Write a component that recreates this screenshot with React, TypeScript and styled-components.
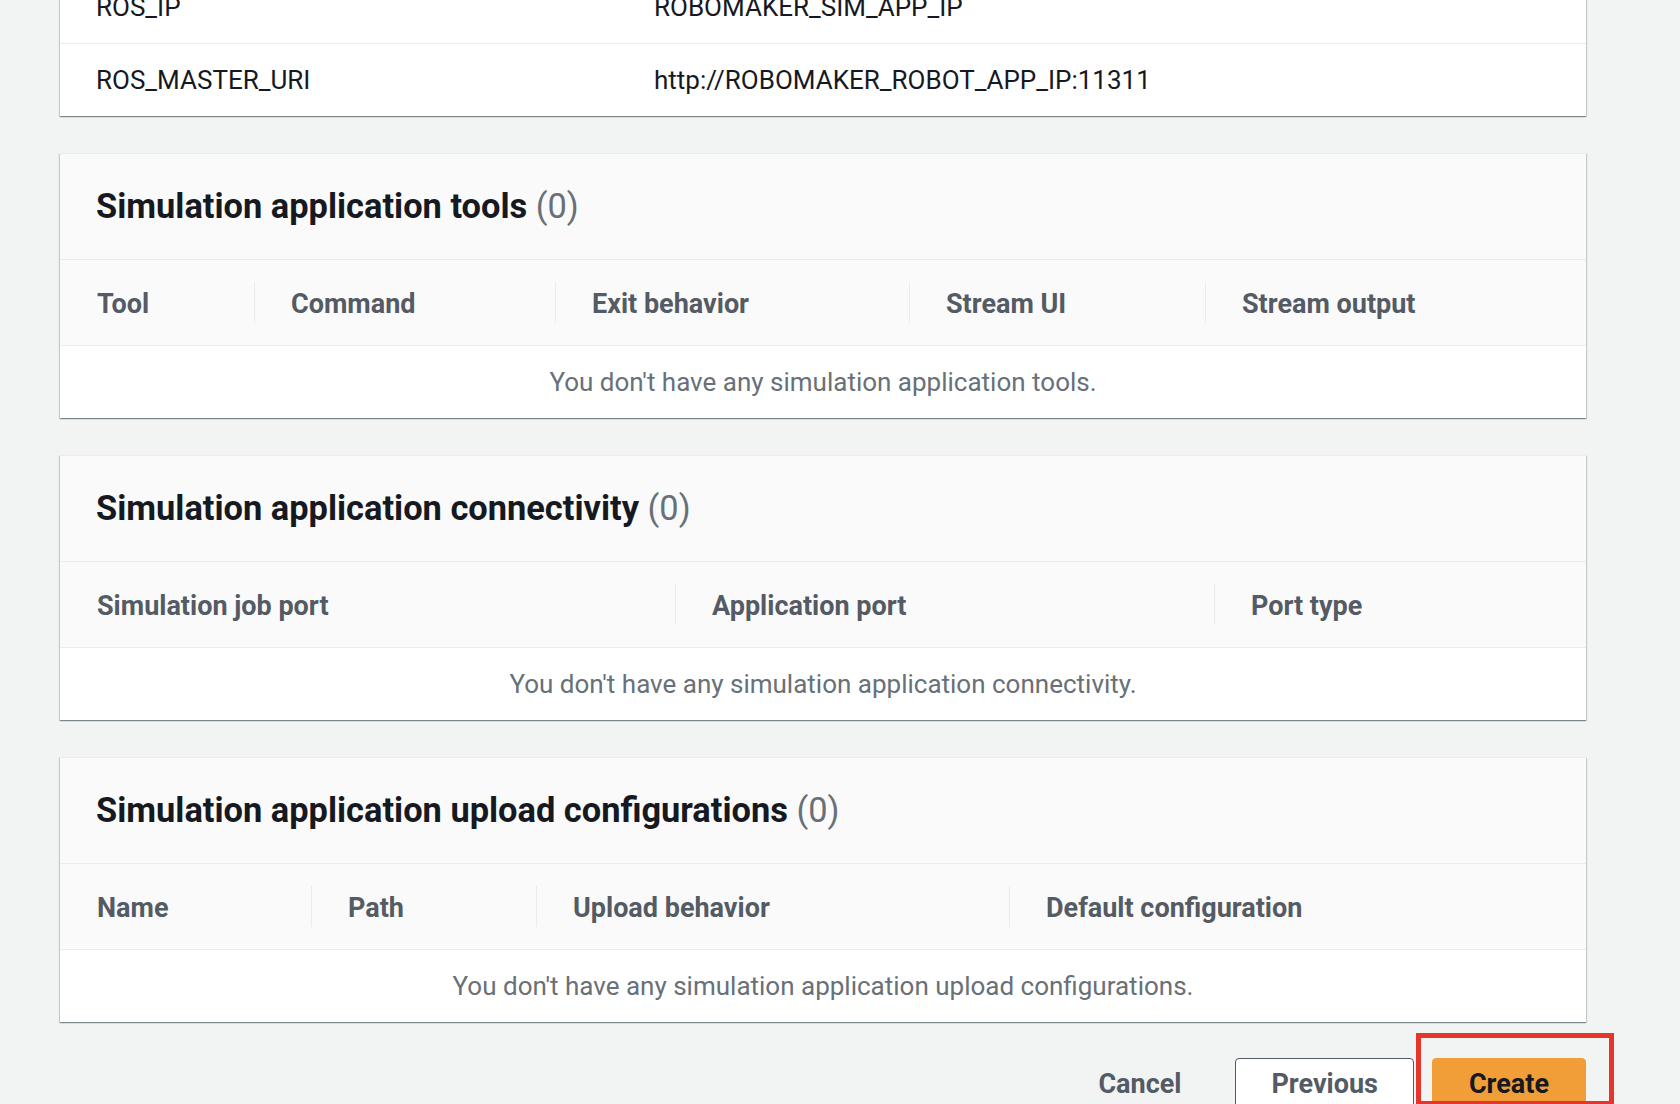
import React from "react";
import styled, { createGlobalStyle } from "styled-components";

const GlobalStyle = createGlobalStyle`
  html, body {
    margin: 0;
    padding: 0;
    background: #f2f3f3;
  }
  body {
    font-family: Roboto, "Liberation Sans", Arial, sans-serif;
    -webkit-font-smoothing: antialiased;
  }
  * { box-sizing: border-box; }
`;

const Page = styled.div`
  height: 1104px;
  overflow: hidden;
  background: #f2f3f3;
`;

const Content = styled.main`
  margin-top: -30px;
  padding: 0 94px 0 60px;
  display: flex;
  flex-direction: column;
  gap: 37px;
`;

const Card = styled.section`
  background: #ffffff;
  border-top: 1px solid #eaeded;
  box-shadow: 0 1px 1px 0 rgba(0, 28, 36, 0.3),
    1px 1px 1px 0 rgba(0, 28, 36, 0.15),
    -1px 1px 1px 0 rgba(0, 28, 36, 0.15);
`;

const CardHeader = styled.header`
  height: 106px;
  display: flex;
  align-items: center;
  padding: 0 36px 2px;
  background: #fafafa;
  border-bottom: 1px solid #eaeded;
`;

const Title = styled.h2`
  margin: 0;
  font-size: 34.4px;
  line-height: 46px;
  font-weight: 700;
  color: #16191f;
`;

const Count = styled.span`
  font-weight: 400;
  color: #687078;
`;

const KVRow = styled.div`
  display: grid;
  grid-template-columns: 558px 1fr;
  height: 73px;
  align-items: center;
  border-bottom: 1px solid #eaeded;
  &:last-child {
    height: 72px;
    border-bottom: none;
  }
`;

const KVCell = styled.div`
  padding-left: 36px;
  font-size: 26px;
  line-height: 36px;
  color: #16191f;
`;

const HeaderRow = styled.div<{ $cols: string }>`
  display: grid;
  grid-template-columns: ${(p) => p.$cols};
  height: 86px;
  align-items: center;
  background: #fafafa;
  border-bottom: 1px solid #eaeded;
`;

const HeaderCell = styled.div`
  display: flex;
  align-items: center;
`;

const HeaderLabel = styled.span<{ $first?: boolean }>`
  display: block;
  width: 100%;
  padding: 4px 0 0 36px;
  height: 41px;
  line-height: 37px;
  font-size: 27px;
  font-weight: 700;
  color: #545b64;
  border-left: 1px solid ${(p) => (p.$first ? "transparent" : "#eaeded")};
  white-space: nowrap;
`;

const EmptyRow = styled.div`
  height: 72px;
  display: flex;
  align-items: center;
  justify-content: center;
  font-size: 26px;
  color: #687078;
`;

const Footer = styled.footer`
  margin-top: -1px;
  display: flex;
  justify-content: flex-end;
  gap: 18px;
`;

const Button = styled.button<{ $variant: "link" | "normal" | "primary" }>`
  height: 52px;
  padding: 0 ${(p) => (p.$variant === "primary" ? 36 : 35)}px;
  border-radius: 4px;
  font-family: Roboto, "Liberation Sans", Arial, sans-serif;
  font-size: 27px;
  font-weight: 700;
  line-height: 50px;
  cursor: pointer;
  border: 1px solid
    ${(p) =>
      p.$variant === "normal"
        ? "#545b64"
        : p.$variant === "primary"
        ? "#f19e38"
        : "transparent"};
  background: ${(p) =>
    p.$variant === "normal"
      ? "#ffffff"
      : p.$variant === "primary"
      ? "#f19e38"
      : "transparent"};
  color: ${(p) => (p.$variant === "primary" ? "#16191f" : "#545b64")};
`;

const Highlight = styled.div`
  position: relative;
  display: flex;
`;

const Marker = styled.span`
  position: absolute;
  left: -16px;
  top: -25px;
  right: -28px;
  height: 73px;
  border: 5px solid #e8352b;
  pointer-events: none;
`;

type TableSpec = {
  title: string;
  cols: string;
  headers: string[];
  empty: string;
};

const tables: TableSpec[] = [
  {
    title: "Simulation application tools",
    cols: "194px 301px 354px 296px 1fr",
    headers: ["Tool", "Command", "Exit behavior", "Stream UI", "Stream output"],
    empty: "You don't have any simulation application tools.",
  },
  {
    title: "Simulation application connectivity",
    cols: "615px 539px 1fr",
    headers: ["Simulation job port", "Application port", "Port type"],
    empty: "You don't have any simulation application connectivity.",
  },
  {
    title: "Simulation application upload configurations",
    cols: "251px 225px 473px 1fr",
    headers: ["Name", "Path", "Upload behavior", "Default configuration"],
    empty: "You don't have any simulation application upload configurations.",
  },
];

const envVars = [
  ["ROS_IP", "ROBOMAKER_SIM_APP_IP"],
  ["ROS_MASTER_URI", "http://ROBOMAKER_ROBOT_APP_IP:11311"],
];

export default function App() {
  return (
    <>
      <GlobalStyle />
      <Page>
        <Content>
          <Card>
            {envVars.map(([k, v]) => (
              <KVRow key={k}>
                <KVCell>{k}</KVCell>
                <KVCell>{v}</KVCell>
              </KVRow>
            ))}
          </Card>
          {tables.map((t) => (
            <Card key={t.title}>
              <CardHeader>
                <Title>
                  {t.title} <Count>(0)</Count>
                </Title>
              </CardHeader>
              <HeaderRow $cols={t.cols}>
                {t.headers.map((h, i) => (
                  <HeaderCell key={h}>
                    <HeaderLabel $first={i === 0}>{h}</HeaderLabel>
                  </HeaderCell>
                ))}
              </HeaderRow>
              <EmptyRow>{t.empty}</EmptyRow>
            </Card>
          ))}
          <Footer>
            <Button $variant="link">Cancel</Button>
            <Button $variant="normal">Previous</Button>
            <Highlight>
              <Button $variant="primary">Create</Button>
              <Marker />
            </Highlight>
          </Footer>
        </Content>
      </Page>
    </>
  );
}
